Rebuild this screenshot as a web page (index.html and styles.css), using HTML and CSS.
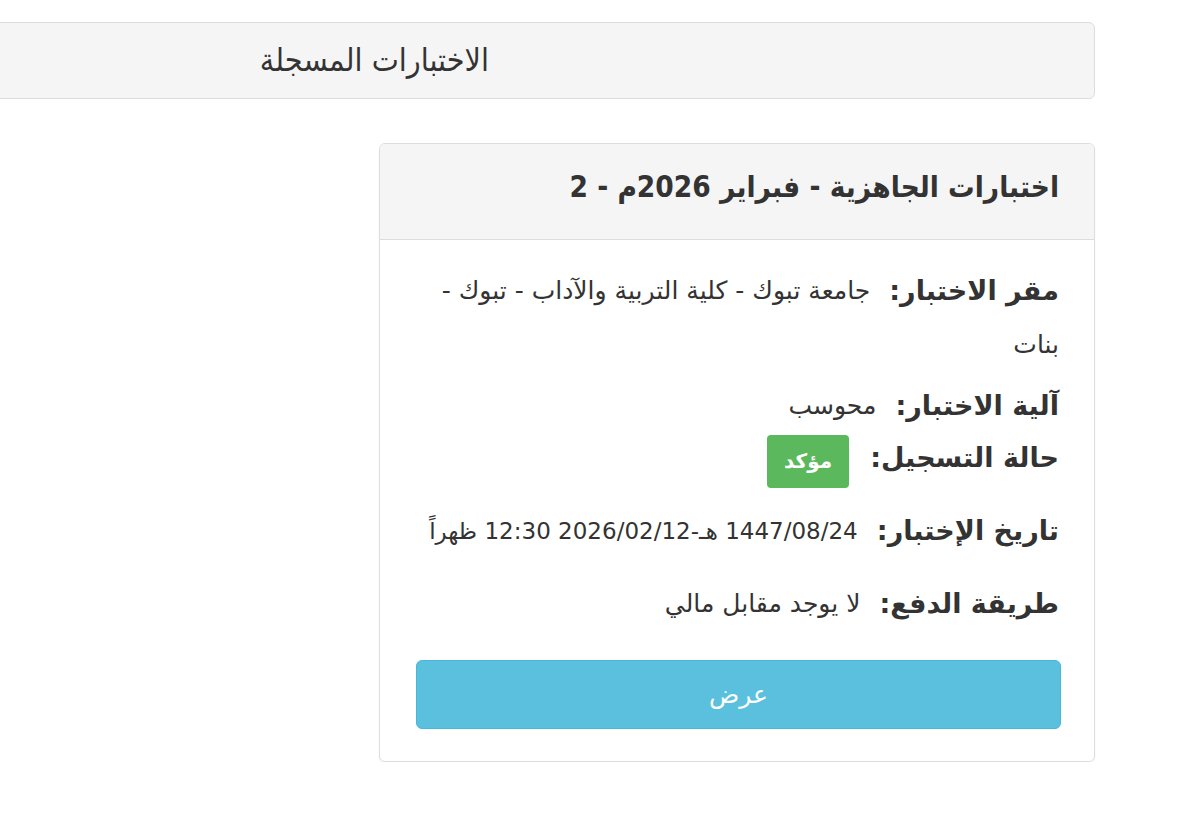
FILE: index.html
```html
<!DOCTYPE html>
<html lang="ar" dir="rtl">
  <head>
    <meta charset="utf-8">
    <title>الاختبارات المسجلة</title>
    <link rel="stylesheet" href="styles.css">
  </head>
  <body>
    <div class="page">
      <div class="bar">الاختبارات المسجلة</div>

      <div class="card">
        <div class="card-head">اختبارات الجاهزية - فبراير 2026م - 2</div>
        <div class="card-body">
          <div class="row first">
            <span class="label">مقر الاختبار:</span>
            <span class="value">جامعة تبوك - كلية التربية والآداب - تبوك - بنات</span>
          </div>
          <div class="row tight">
            <span class="label">آلية الاختبار:</span>
            <span class="value">محوسب</span>
          </div>
          <div class="row">
            <span class="label">حالة التسجيل:</span>
            <span class="badge">مؤكد</span>
          </div>
          <div class="row">
            <span class="label">تاريخ الإختبار:</span>
            <span class="value date">1447/08/24 هـ-2026/02/12 12:30 ظهراً</span>
          </div>
          <div class="row">
            <span class="label">طريقة الدفع:</span>
            <span class="value">لا يوجد مقابل مالي</span>
          </div>
          <a class="btn" href="#">عرض</a>
        </div>
      </div>
    </div>
  </body>
</html>
```

FILE: styles.css
```css
html, body {
  margin: 0;
  background: #fff;
}
body {
  font-family: "DejaVu Sans", sans-serif;
  color: #333;
  overflow: hidden;
}
.page {
  padding: 22px 105px 0 0;
}
.bar {
  margin-left: -20px;
  height: 75px;
  line-height: 75px;
  padding-right: 605px;
  background: #f5f5f5;
  border: 1px solid #ddd;
  border-radius: 6px;
  font-family: "DejaVu Sans Condensed", "DejaVu Sans", sans-serif;
  font-size: 32px;
}
.card {
  width: 714px;
  margin-top: 44px;
  border: 1px solid #ddd;
  border-radius: 6px;
  box-shadow: 0 1px 2px rgba(0, 0, 0, 0.06);
}
.card-head {
  height: 95px;
  line-height: 86px;
  padding-right: 35px;
  background: #f5f5f5;
  border-bottom: 1px solid #ddd;
  border-radius: 6px 6px 0 0;
  font-family: "DejaVu Sans Condensed", "DejaVu Sans", sans-serif;
  font-weight: bold;
  font-size: 29.5px;
}
.card-body {
  padding: 24px 33px 32px 36px;
}
.row {
  padding-right: 2px;
  line-height: 52px;
  margin-bottom: 21px;
}
.row > span {
  vertical-align: top;
}
.row.first {
  line-height: 54px;
  margin-bottom: 8px;
}
.row.tight {
  margin-bottom: 0;
}
.label {
  font-weight: bold;
  font-size: 27px;
  margin-left: 14px;
}
.value {
  font-size: 25px;
}
.date {
  font-size: 23px;
}
.row > .badge {
  display: inline-block;
  margin: 3px 2px -4px 0;
  padding: 0 17px;
  height: 53px;
  line-height: 53px;
  background: #5cb85c;
  color: #fff;
  border-radius: 4px;
  font-weight: bold;
  font-size: 20px;
}
.btn {
  display: block;
  margin-top: 30px;
  height: 67px;
  line-height: 67px;
  text-align: center;
  background: #5bc0de;
  border: 1px solid #46b8da;
  border-radius: 6px;
  color: #fff;
  text-decoration: none;
  font-size: 25px;
}
```
